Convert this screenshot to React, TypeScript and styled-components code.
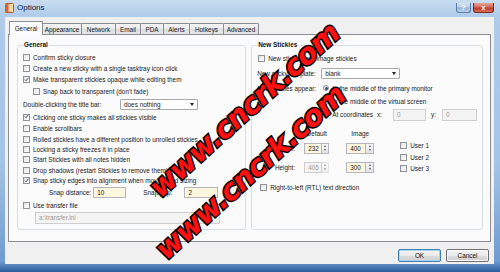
import styled, { createGlobalStyle } from "styled-components";

const GlobalStyle = createGlobalStyle`
  html, body {
    margin: 0;
    padding: 0;
  }
  body {
    width: 500px;
    height: 272px;
    overflow: hidden;
    background: #ffffff;
    font-family: "Liberation Sans", Arial, sans-serif;
    font-size: 6.4px;
    color: #1a1a1a;
  }
`;

const Window = styled.div`
  position: relative;
  width: 500px;
  height: 272px;
  box-sizing: border-box;
  padding: 0 6px 8px 5px;
  display: flex;
  flex-direction: column;
  overflow: hidden;
  background: linear-gradient(
    to bottom,
    #c9ddf1 0px,
    #aecbea 17px,
    #a4c4e6 60%,
    #6e9bd0 96%,
    #2b5b9b 100%
  );
`;

const TitleBar = styled.div`
  height: 17px;
  display: flex;
  align-items: flex-start;
  flex-shrink: 0;
`;

const AppIcon = styled.svg`
  width: 9px;
  height: 10px;
  margin-top: 3px;
  margin-right: 3px;
`;

const Title = styled.div`
  font-size: 8px;
  line-height: 8px;
  margin-top: 4px;
  color: #10203a;
  flex: 1;
`;

const CaptionButton = styled.div<{ $close?: boolean; $w: number }>`
  width: ${({ $w }) => $w}px;
  height: 10px;
  margin-top: 3px;
  box-sizing: border-box;
  border: 1px solid ${({ $close }) => ($close ? "#7a2a22" : "#5b7fa8")};
  border-top: none;
  border-radius: 0 0 3px 3px;
  display: flex;
  align-items: center;
  justify-content: center;
  font-size: 7px;
  font-weight: bold;
  color: #ffffff;
  background: ${({ $close }) =>
    $close
      ? "linear-gradient(to bottom, #e6a497 0%, #d46a5c 45%, #c0392b 55%, #d9705c 100%)"
      : "linear-gradient(to bottom, #d6e4f3 0%, #b8cde6 45%, #9ab5d8 55%, #b9d0ea 100%)"};
  & + & {
    margin-left: 2px;
  }
`;

const Client = styled.div`
  flex: 1;
  background: #f0f0f0;
  display: flex;
  flex-direction: column;
  padding: 4px 3px 0 3px;
`;

const TabStrip = styled.div`
  display: flex;
  align-items: flex-end;
  height: 14px;
  padding-left: 1px;
  position: relative;
  z-index: 2;
`;

const Tab = styled.div<{ $w: number; $active?: boolean }>`
  width: ${({ $w }) => $w}px;
  height: ${({ $active }) => ($active ? 14 : 12)}px;
  box-sizing: border-box;
  border: 1px solid #8a8d94;
  border-bottom: ${({ $active }) => ($active ? "none" : "1px solid #8a8d94")};
  border-radius: 1px 1px 0 0;
  margin-right: -1px;
  display: flex;
  align-items: center;
  justify-content: center;
  padding-bottom: ${({ $active }) => ($active ? 1 : 0)}px;
  background: ${({ $active }) =>
    $active
      ? "#fcfcfe"
      : "linear-gradient(to bottom, #f3f3f3 0%, #ebebeb 50%, #dedede 51%, #e6e6e6 100%)"};
  color: #1a1a1a;
  white-space: nowrap;
  position: relative;
  z-index: ${({ $active }) => ($active ? 2 : 1)};
`;

const Panel = styled.div`
  height: 208px;
  margin-top: -1px;
  box-sizing: border-box;
  border: 1px solid #8a8d94;
  background: #fbfbfb;
  display: flex;
  gap: 5px;
  padding: 6px 7px 0 8px;
`;

const Group = styled.fieldset<{ $w: number }>`
  width: ${({ $w }) => $w}px;
  height: 189px;
  box-sizing: border-box;
  margin: 0;
  border: 1px solid #d6dde3;
  border-radius: 3px;
  padding: 3px 5px 0 5px;
  display: flex;
  flex-direction: column;
`;

const Legend = styled.legend`
  font-weight: bold;
  line-height: 8px;
  padding: 0 1px;
  margin-left: 0;
  color: #111;
`;

const Row = styled.div<{ $h?: number; $indent?: number; $top?: number }>`
  height: ${({ $h }) => $h ?? 11}px;
  display: flex;
  align-items: center;
  padding-left: ${({ $indent }) => $indent ?? 0}px;
  margin-top: ${({ $top }) => $top ?? 0}px;
  white-space: nowrap;
  flex-shrink: 0;
`;

const Box = styled.span<{ $round?: boolean }>`
  width: 7px;
  height: 7px;
  box-sizing: border-box;
  border: 1px solid #8f9296;
  border-radius: ${({ $round }) => ($round ? "50%" : "0")};
  background: linear-gradient(135deg, #e4e4e4 0%, #f6f6f6 70%, #ffffff 100%);
  margin-right: 3px;
  flex-shrink: 0;
  display: flex;
  align-items: center;
  justify-content: center;
`;

const Dot = styled.span`
  width: 3px;
  height: 3px;
  border-radius: 50%;
  background: #2c4f7a;
`;

const Check = () => (
  <svg width="7" height="7" viewBox="0 0 7 7" style={{ marginTop: "-1px" }}>
    <path d="M1.2 3.6 L2.9 5.3 L6.2 1" fill="none" stroke="#2a4466" strokeWidth="1.2" />
  </svg>
);

type CheckProps = { label: string; checked?: boolean; h?: number; indent?: number; top?: number };

const CheckItem = ({ label, checked, h, indent, top }: CheckProps) => (
  <Row $h={h} $indent={indent} $top={top}>
    <Box>{checked && <Check />}</Box>
    <span>{label}</span>
  </Row>
);

const Radio = ({ checked }: { checked?: boolean }) => (
  <Box $round style={{ width: 6, height: 6 }}>
    {checked && <Dot />}
  </Box>
);

const Select = styled.div<{ $w: number }>`
  width: ${({ $w }) => $w}px;
  height: 11px;
  box-sizing: border-box;
  border: 1px solid #a9a9a9;
  border-radius: 1px;
  background: #ffffff;
  display: flex;
  align-items: center;
  padding: 0 3px;
  justify-content: space-between;
  &::after {
    content: "";
    border-left: 2.5px solid transparent;
    border-right: 2.5px solid transparent;
    border-top: 3px solid #222;
  }
`;

const Field = styled.div<{ $w: number; $off?: boolean; $plain?: boolean; $h?: number }>`
  width: ${({ $w }) => $w}px;
  height: ${({ $h }) => $h ?? 11}px;
  box-sizing: border-box;
  border: 1px solid ${({ $off }) => ($off ? "#cfcfcf" : "#b3b7bd")};
  background: ${({ $off, $plain }) => ($off ? "#f4f4f4" : $plain ? "#ffffff" : "#fdf6de")};
  color: ${({ $off }) => ($off ? "#9a9a9a" : "#1a1a1a")};
  display: flex;
  align-items: center;
  padding-left: 3px;
  flex-shrink: 0;
`;

const Spinner = styled.div<{ $w: number; $off?: boolean }>`
  width: ${({ $w }) => $w}px;
  height: 11px;
  box-sizing: border-box;
  border: 1px solid ${({ $off }) => ($off ? "#d4d4d4" : "#b3b7bd")};
  border-left: none;
  background: linear-gradient(to bottom, #f7f7f7, #e4e4e4);
  display: flex;
  flex-direction: column;
  align-items: center;
  justify-content: space-around;
  flex-shrink: 0;
  opacity: ${({ $off }) => ($off ? 0.6 : 1)};
`;

const Arrow = styled.span<{ $down?: boolean }>`
  border-left: 1.5px solid transparent;
  border-right: 1.5px solid transparent;
  ${({ $down }) => ($down ? "border-top: 2px solid #4a5a70;" : "border-bottom: 2px solid #4a5a70;")}
`;

const Spin = styled.div`
  display: flex;
`;

const NumberBox = ({ value, w, sw, off }: { value: string; w: number; sw: number; off?: boolean }) => (
  <Spin>
    <Field $w={w} $off={off}>{value}</Field>
    <Spinner $w={sw} $off={off}>
      <Arrow />
      <Arrow $down />
    </Spinner>
  </Spin>
);

const Label = styled.span<{ $w?: number; $right?: boolean; $gap?: number }>`
  width: ${({ $w }) => ($w ? `${$w}px` : "auto")};
  text-align: ${({ $right }) => ($right ? "right" : "left")};
  margin-right: ${({ $gap }) => $gap ?? 0}px;
  flex-shrink: 0;
  white-space: nowrap;
`;

const SizeArea = styled.div`
  display: flex;
  margin-top: 6px;
`;

const SizeGrid = styled.div`
  display: grid;
  grid-template-columns: 38px 25px 36px;
  grid-template-rows: 12px 18px 20px;
  column-gap: 9px;
  align-items: center;
  & > :nth-child(3n) {
    padding-left: 8px;
  }
`;

const ColHead = styled.div`
  text-align: center;
`;

const UserList = styled.div`
  display: flex;
  flex-direction: column;
  margin-left: 26px;
  padding-top: 13px;
`;

const ButtonRow = styled.div`
  display: flex;
  justify-content: flex-end;
  gap: 5px;
  padding: 7px 2px 0 0;
`;

const Button = styled.div<{ $default?: boolean }>`
  width: 43px;
  height: 13px;
  box-sizing: border-box;
  border: 1px solid ${({ $default }) => ($default ? "#3c7fb1" : "#707070")};
  border-radius: 2px;
  background: linear-gradient(to bottom, #f4f4f4 0%, #ebebeb 50%, #dddddd 51%, #cfcfcf 100%);
  box-shadow: inset 0 0 0 1px ${({ $default }) => ($default ? "#a9d6f0" : "#fcfcfc")};
  display: flex;
  align-items: center;
  justify-content: center;
  color: #111;
`;

const Watermark = styled.div<{ $x: number; $y: number }>`
  position: absolute;
  left: ${({ $x }) => $x}px;
  top: ${({ $y }) => $y}px;
  transform: translate(-50%, -50%) rotate(-42deg);
  font-family: "DejaVu Sans", sans-serif;
  font-weight: bold;
  font-style: italic;
  font-size: 29px;
  letter-spacing: -1px;
  color: #ff1010;
  -webkit-text-stroke: 3px #000;
  paint-order: stroke fill;
  white-space: nowrap;
  pointer-events: none;
  z-index: 5;
`;

const tabs: [string, number][] = [
  ["General", 34],
  ["Appearance", 40],
  ["Network", 35],
  ["Email", 26],
  ["PDA", 24],
  ["Alerts", 27],
  ["Hotkeys", 35],
  ["Advanced", 36],
];

export default function App() {
  return (
    <>
      <GlobalStyle />
      <Window>
        <TitleBar>
          <AppIcon viewBox="0 0 9 10">
            <rect x="0.5" y="0.5" width="8" height="9" rx="1" fill="#f6d7a8" stroke="#b5542b" />
            <rect x="0.5" y="0.5" width="3" height="9" fill="#d9652e" />
          </AppIcon>
          <Title>Options</Title>
          <CaptionButton $w={15}>?</CaptionButton>
          <CaptionButton $w={21} $close>x</CaptionButton>
        </TitleBar>
        <Client>
          <TabStrip>
            {tabs.map(([name, w], i) => (
              <Tab key={name} $w={w} $active={i === 0}>
                {name}
              </Tab>
            ))}
          </TabStrip>
          <Panel>
            <Group $w={231}>
              <Legend>General</Legend>
              <CheckItem label="Confirm sticky closure" />
              <CheckItem label="Create a new sticky with a single tasktray icon click" />
              <CheckItem label="Make transparent stickies opaque while editing them" checked />
              <CheckItem label="Snap back to transparent (don't fade)" indent={10} h={12} />
              <Row $h={14}>
                <Label $w={97}>Double-clicking the title bar:</Label>
                <Select $w={78}>does nothing</Select>
              </Row>
              <CheckItem label="Clicking one sticky makes all stickies visible" checked h={12} />
              <CheckItem label="Enable scrollbars" />
              <CheckItem label="Rolled stickies have a different position to unrolled stickies" h={10} />
              <CheckItem label="Locking a sticky freezes it in place" h={10} />
              <CheckItem label="Start Stickies with all notes hidden" />
              <CheckItem label="Drop shadows (restart Stickies to remove them)" h={10} />
              <CheckItem label="Snap sticky edges into alignment when moving and sizing" checked />
              <Row $h={13} $indent={26}>
                <Label $gap={2}>Snap distance:</Label>
                <Field $w={33}>10</Field>
                <Label $gap={12} style={{ marginLeft: 17 }}>Snap gap:</Label>
                <Field $w={34}>2</Field>
              </Row>
              <CheckItem label="Use transfer file" h={12} />
              <Row $h={13} $indent={12}>
                <Field $w={185} $h={12} $off>a:\transfer.ini</Field>
              </Row>
            </Group>
            <Group $w={231}>
              <Legend>New Stickies</Legend>
              <CheckItem label="New stickies are image stickies" h={13} indent={1} />
              <Row $h={16}>
                <Label $w={58} $right $gap={6}>New sticky template:</Label>
                <Select $w={79}>blank</Select>
              </Row>
              <Row $h={14}>
                <Label $w={58} $right $gap={8}>New stickies appear:</Label>
                <Radio checked />
                <span>In the middle of the primary monitor</span>
              </Row>
              <Row $h={13} $indent={66}>
                <Radio />
                <span>In the middle of the virtual screen</span>
              </Row>
              <Row $h={13} $indent={66}>
                <Radio />
                <Label $gap={4}>At coordinates</Label>
                <Label $gap={11}>x:</Label>
                <Field $w={33} $h={12} $off>0</Field>
                <Label $gap={6} style={{ marginLeft: 5 }}>y:</Label>
                <Field $w={35} $h={12} $off>0</Field>
              </Row>
              <SizeArea>
                <SizeGrid>
                  <span />
                  <ColHead>Default</ColHead>
                  <ColHead>Image</ColHead>
                  <Label $right>Width:</Label>
                  <NumberBox value="232" w={18} sw={7} />
                  <NumberBox value="400" w={20} sw={8} />
                  <Label $right>Height:</Label>
                  <NumberBox value="405" w={18} sw={7} off />
                  <NumberBox value="300" w={20} sw={8} />
                </SizeGrid>
                <UserList>
                  <CheckItem label="User 1" h={11.5} />
                  <CheckItem label="User 2" h={11.5} />
                  <CheckItem label="User 3" h={11.5} />
                </UserList>
              </SizeArea>
              <CheckItem label="Right-to-left (RTL) text direction" h={12} indent={3} top={4} />
            </Group>
          </Panel>
          <ButtonRow>
            <Button $default>OK</Button>
            <Button>Cancel</Button>
          </ButtonRow>
        </Client>
        <Watermark $x={244} $y={110}>www.cncrk.com</Watermark>
        <Watermark $x={250} $y={172}>www.cncrk.com</Watermark>
      </Window>
    </>
  );
}
